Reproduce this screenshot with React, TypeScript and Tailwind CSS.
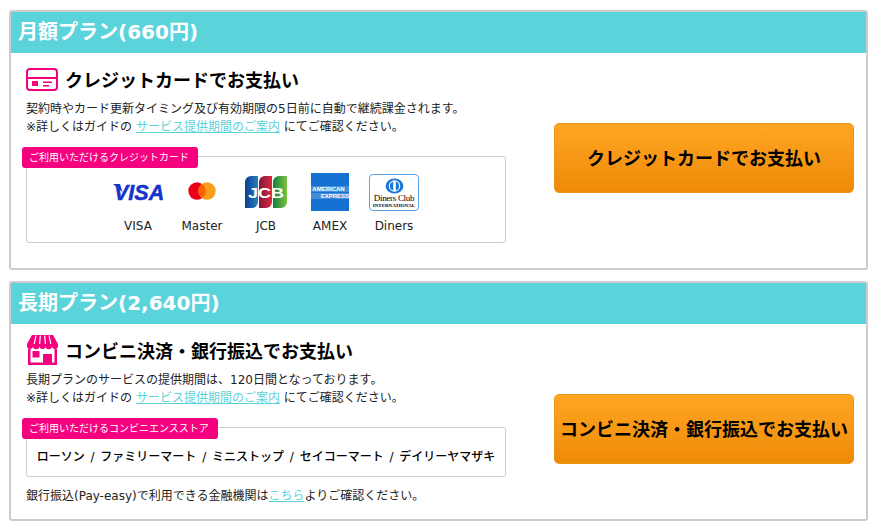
const jpFont = "font-['DejaVu_Sans','Noto_Sans_CJK_JP',sans-serif]";

function CardIcon() {
  return (
    <svg viewBox="0 0 32 23" className="h-[23px] w-[32px]" fill="none">
      <rect x="1" y="1" width="30" height="21" rx="3" stroke="#f5007f" strokeWidth="2" />
      <rect x="1" y="9" width="30" height="2" fill="#f5007f" />
      <rect x="6" y="13" width="6" height="5" fill="#f5007f" />
      <rect x="17" y="13.500" width="9" height="1.500" fill="#f5007f" />
      <rect x="17" y="17" width="6" height="1.500" fill="#f5007f" />
    </svg>
  );
}

function ShopIcon() {
  return (
    <svg viewBox="0 0 31 30" className="h-[30px] w-[31px]">
      <path d="M5 0h21l5 9v2a3 3 0 0 1-6 0 3 3 0 0 1-6.500 0 3 3 0 0 1-6 0 3 3 0 0 1-6.500 0 3 3 0 0 1-6 0V9z" fill="#f5007f" />
      <path d="M9 0.500 7.200 9M13.300 0.500l-.7 8.500M17.700 0.500l.7 8.500M22 0.500 23.800 9" stroke="#fff" strokeWidth="1.200" />
      <path d="M1 14h2.500v13.500h24V14H30v16H1z" fill="#f5007f" />
      <rect x="5.500" y="16" width="7" height="6.500" fill="#f5007f" />
      <rect x="16" y="19" width="9" height="10" fill="#f5007f" />
    </svg>
  );
}

function VisaLogo() {
  return (
    <svg viewBox="0 0 52 26" className="h-[26px] w-[52px]">
      <path d="M1 5h7l2.500 8z" fill="#1434cb" />
      <text x="2" y="20.500" fill="#1434cb" fontSize="21.500" fontWeight="700" fontStyle="italic" fontFamily="Liberation Sans" stroke="#1434cb" strokeWidth="0.500">VISA</text>
    </svg>
  );
}

function MasterLogo() {
  return (
    <svg viewBox="0 0 28 18" className="-mt-[2px] h-[18px] w-[28px]">
      <circle cx="9" cy="9" r="8.700" fill="#eb001b" />
      <circle cx="19" cy="9" r="8.700" fill="#f79e1b" />
      <path d="M14 1.900a8.700 8.700 0 0 1 0 14.200 8.700 8.700 0 0 1 0-14.200z" fill="#ff5f00" />
    </svg>
  );
}

function JcbLogo() {
  return (
    <svg viewBox="0 0 42 32" className="h-[32px] w-[42px]">
      <defs>
        <linearGradient id="jcbBlue" x1="0" x2="1" y1="0" y2="0">
          <stop offset="0" stopColor="#0b3f8c" />
          <stop offset="1" stopColor="#2a7fc4" />
        </linearGradient>
        <linearGradient id="jcbRed" x1="0" x2="1" y1="0" y2="0">
          <stop offset="0" stopColor="#7d1a3a" />
          <stop offset="1" stopColor="#e0253f" />
        </linearGradient>
        <linearGradient id="jcbGreen" x1="0" x2="1" y1="0" y2="0">
          <stop offset="0" stopColor="#12813c" />
          <stop offset="1" stopColor="#7cc242" />
        </linearGradient>
      </defs>
      <path d="M6 0h7v26a6 6 0 0 1-6 6H0V6a6 6 0 0 1 6-6z" fill="url(#jcbBlue)" />
      <path d="M20 0h7v26a6 6 0 0 1-6 6h-7V6a6 6 0 0 1 6-6z" fill="url(#jcbRed)" />
      <path d="M34 0h8v26a6 6 0 0 1-6 6h-8V6a6 6 0 0 1 6-6z" fill="url(#jcbGreen)" />
      <text x="3" y="22" fill="#fff" fontSize="14" fontWeight="700" fontFamily="Liberation Sans" textLength="36" lengthAdjust="spacingAndGlyphs">JCB</text>
    </svg>
  );
}

function AmexLogo() {
  return (
    <div className="flex h-[38px] w-[38px] flex-col items-center justify-center bg-[#1572d3] font-['Liberation_Sans',sans-serif] text-[6px] font-bold leading-[6px] text-white">
      <span className="w-full bg-white/20 pr-[3px] text-center">AMERICAN</span>
      <span className="mt-[1px] w-full bg-white/20 pl-[7px] text-right">EXPRESS</span>
    </div>
  );
}

function DinersLogo() {
  return (
    <div className="flex h-[37px] w-[50px] flex-col items-center rounded-[4px] border border-[#5aa5e8] bg-white pt-[3px] font-['Liberation_Serif',serif] text-black">
      <svg viewBox="0 0 22 18" className="h-[16px] w-[21px]">
        <ellipse cx="11" cy="9" rx="10" ry="8.500" fill="#1a76d2" />
        <circle cx="11" cy="9" r="6.500" fill="#fff" />
        <path d="M9.500 3.800v10.400a5.500 5.500 0 0 1 0-10.400zM12.500 3.800v10.400a5.500 5.500 0 0 0 0-10.400z" fill="#1a76d2" />
      </svg>
      <span className="text-[9px] leading-[9px] tracking-[-0.3px]">Diners Club</span>
      <span className="text-[5px] font-bold leading-[6px]">INTERNATIONAL</span>
    </div>
  );
}

const brands = [
  { name: "VISA", logo: <VisaLogo /> },
  { name: "Master", logo: <MasterLogo /> },
  { name: "JCB", logo: <JcbLogo /> },
  { name: "AMEX", logo: <AmexLogo /> },
  { name: "Diners", logo: <DinersLogo /> },
];

function Tag({ children }: { children: string }) {
  return (
    <span className="absolute -top-[10px] -left-[5px] flex h-[21px] items-center rounded-[3px] bg-[#f5007f] pr-[9px] pl-[7px] text-[10px] text-white">
      {children}
    </span>
  );
}

function GuideNote() {
  return (
    <p>
      ※詳しくはガイドの{" "}
      <a href="#" className="text-[#5bd3db] underline">
        サービス提供期間のご案内
      </a>{" "}
      にてご確認ください。
    </p>
  );
}

function Plan({
  title,
  icon,
  heading,
  lead,
  tag,
  button,
  children,
  footer,
  height,
}: {
  title: string;
  icon: React.ReactNode;
  heading: string;
  lead: string;
  tag: string;
  button: string;
  children: React.ReactNode;
  footer?: React.ReactNode;
  height: string;
}) {
  return (
    <section className={`${height} rounded-[3px] border-2 border-[#cccccc] bg-white`}>
      <h2 className="flex h-[41px] items-center bg-[#5bd3db] pb-[2px] pl-[7px] text-[20px] font-bold text-white">{title}</h2>
      <div className="flex justify-between pr-[12px] pl-[15px]">
        <div className="w-[480px]">
          <div className="box-content flex h-[30px] items-center gap-[7px] pt-[11px]">
            <span className="flex w-[32px] justify-center">{icon}</span>
            <h3 className="mt-[2px] text-[18px] font-bold text-black">{heading}</h3>
          </div>
          <div className="mt-[6px] text-[12px] leading-[18px] text-[#222222]">
            <p>{lead}</p>
            <GuideNote />
          </div>
          <div className="relative mt-[20px] rounded-[3px] border border-[#cccccc]">
            <Tag>{tag}</Tag>
            {children}
          </div>
          {footer}
        </div>
        <button className="mt-[70px] h-[70px] w-[300px] rounded-[5px] border border-[#e8931a] bg-gradient-to-b from-[#ffa521] to-[#ee8b05] text-[18px] font-bold text-black">
          {button}
        </button>
      </div>
    </section>
  );
}

export default function App() {
  return (
    <main className={`flex min-h-[527px] flex-col gap-[11px] bg-white pt-[10px] pr-[11px] pl-[9px] ${jpFont}`}>
      <Plan
        height="h-[260px]"
        title="月額プラン(660円)"
        icon={<CardIcon />}
        heading="クレジットカードでお支払い"
        lead="契約時やカード更新タイミング及び有効期限の5日前に自動で継続課金されます。"
        tag="ご利用いただけるクレジットカード"
        button="クレジットカードでお支払い"
      >
        <div className="flex h-[85px] justify-center pt-[16px]">
          {brands.map((brand) => (
            <div key={brand.name} className="flex w-[64px] flex-col items-center">
              <div className="flex h-[38px] items-center justify-center">{brand.logo}</div>
              <span className="mt-[6px] text-[12px] leading-[18px] text-[#222222]">{brand.name}</span>
            </div>
          ))}
        </div>
      </Plan>
      <Plan
        height="h-[240px]"
        title="長期プラン(2,640円)"
        icon={<ShopIcon />}
        heading="コンビニ決済・銀行振込でお支払い"
        lead="長期プランのサービスの提供期間は、120日間となっております。"
        tag="ご利用いただけるコンビニエンスストア"
        button="コンビニ決済・銀行振込でお支払い"
        footer={
          <p className="mt-[10px] text-[12px] leading-[18px] text-[#222222]">
            銀行振込(Pay-easy)で利用できる金融機関は
            <a href="#" className="text-[#5bd3db] underline">
              こちら
            </a>
            よりご確認ください。
          </p>
        }
      >
        <div className="flex h-[48px] items-center justify-center pt-[9px] text-[12px] font-medium text-black [word-spacing:2px]">
          ローソン / ファミリーマート / ミニストップ / セイコーマート / デイリーヤマザキ
        </div>
      </Plan>
    </main>
  );
}
